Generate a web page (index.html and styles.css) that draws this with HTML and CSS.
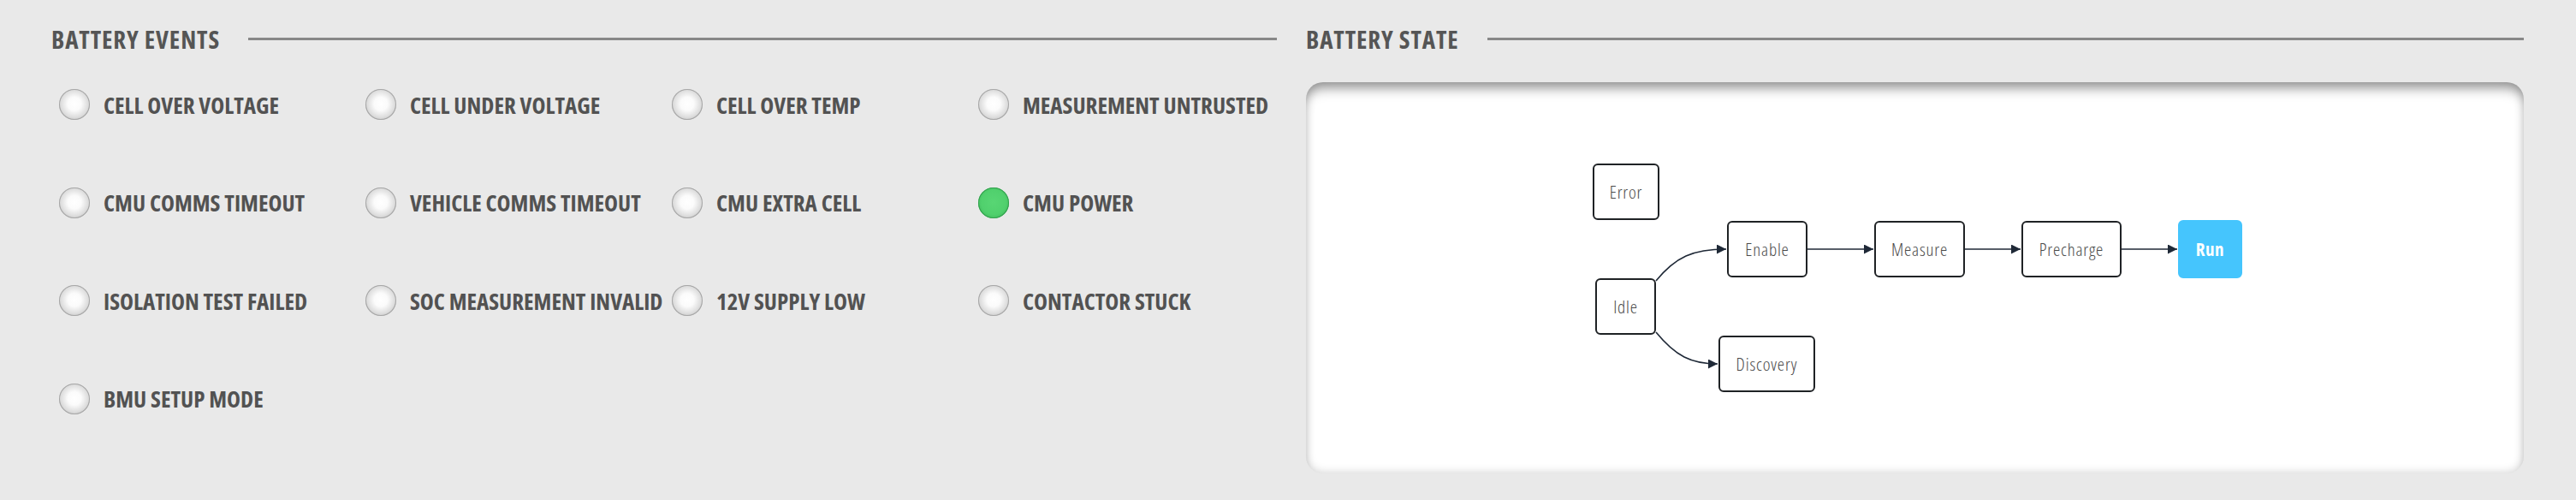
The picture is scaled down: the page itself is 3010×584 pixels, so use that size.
FILE: index.html
```html
<!DOCTYPE html>
<html lang="en">
<head>
<meta charset="utf-8">
<title>Battery</title>
<link rel="stylesheet" href="styles.css">
</head>
<body>
<div class="page">
  <section class="col">
    <div class="section-head"><h2 class="title">BATTERY EVENTS</h2><div class="rule"></div></div>
    <div class="events">
      <div class="event"><span class="led"></span><span class="label">CELL OVER VOLTAGE</span></div>
      <div class="event"><span class="led"></span><span class="label">CELL UNDER VOLTAGE</span></div>
      <div class="event"><span class="led"></span><span class="label">CELL OVER TEMP</span></div>
      <div class="event"><span class="led"></span><span class="label">MEASUREMENT UNTRUSTED</span></div>
      <div class="event"><span class="led"></span><span class="label">CMU COMMS TIMEOUT</span></div>
      <div class="event"><span class="led"></span><span class="label">VEHICLE COMMS TIMEOUT</span></div>
      <div class="event"><span class="led"></span><span class="label">CMU EXTRA CELL</span></div>
      <div class="event"><span class="led on"></span><span class="label">CMU POWER</span></div>
      <div class="event"><span class="led"></span><span class="label">ISOLATION TEST FAILED</span></div>
      <div class="event"><span class="led"></span><span class="label">SOC MEASUREMENT INVALID</span></div>
      <div class="event"><span class="led"></span><span class="label">12V SUPPLY LOW</span></div>
      <div class="event"><span class="led"></span><span class="label">CONTACTOR STUCK</span></div>
      <div class="event"><span class="led"></span><span class="label">BMU SETUP MODE</span></div>
    </div>
  </section>
  <section class="col">
    <div class="section-head"><h2 class="title">BATTERY STATE</h2><div class="rule"></div></div>
    <div class="card">
      <div class="diagram">
        <svg class="edges" width="1424" height="457" viewBox="0 0 1424 457">
          <defs>
            <marker id="arrow" viewBox="0 0 10 10" refX="10" refY="5" markerWidth="11" markerHeight="11" markerUnits="userSpaceOnUse" orient="auto">
              <path class="head" d="M0,0 L10,5 L0,10 z"/>
            </marker>
          </defs>
          <path class="edge" d="M409,232 C432,204 452,195 491,195" marker-end="url(#arrow)"/>
          <path class="edge" d="M409,292 C432,320 450,329 481,329" marker-end="url(#arrow)"/>
          <path class="edge" d="M586,195 L663,195" marker-end="url(#arrow)"/>
          <path class="edge" d="M770,195 L835,195" marker-end="url(#arrow)"/>
          <path class="edge" d="M953,195 L1018,195" marker-end="url(#arrow)"/>
        </svg>
        <div class="node n-error">Error</div>
        <div class="node n-idle">Idle</div>
        <div class="node n-enable">Enable</div>
        <div class="node n-measure">Measure</div>
        <div class="node n-precharge">Precharge</div>
        <div class="node n-run active">Run</div>
        <div class="node n-discovery">Discovery</div>
      </div>
    </div>
  </section>
</div>
</body>
</html>
```

FILE: styles.css
```css
* { box-sizing: border-box; }
html, body { margin: 0; padding: 0; }
body {
  background: #e9e9e9;
  width: 3010px;
  height: 584px;
  overflow: hidden;
  font-family: "Open Sans", "DejaVu Sans Condensed", sans-serif;
  font-stretch: 75%;
  color: #555555;
}
.page {
  display: grid;
  grid-template-columns: 1432fr 1423fr;
  column-gap: 34px;
  padding: 0 61px 0 60px;
}
.section-head {
  display: flex;
  align-items: center;
  height: 40px;
  margin-top: 25px;
}
.title {
  margin: 0;
  font-weight: 700;
  font-size: 29px;
  letter-spacing: 0.9px;
  line-height: 1;
  color: #555555;
  white-space: nowrap;
}
.rule {
  flex: 1;
  height: 3px;
  margin-left: 33px;
  background: #888888;
}
.events {
  display: grid;
  grid-template-columns: repeat(4, 1fr);
  grid-auto-rows: 114.5px;
  align-items: center;
  margin-top: 0;
}
.event {
  display: flex;
  align-items: center;
  gap: 16px;
  padding-left: 9px;
  white-space: nowrap;
}
.led {
  flex: none;
  width: 36px;
  height: 36px;
  border-radius: 50%;
  background: radial-gradient(circle at 50% 48%, #ffffff 0%, #fbfbfb 30%, #dcdcdc 62%, #a8a8a8 90%, #9a9a9a 100%);
  box-shadow: 0 0 0 1px #a6a6a6 inset;
}
.led.on {
  background: radial-gradient(circle at 50% 48%, #58d674 0%, #50d06d 55%, #3fb85a 82%, #2e9a48 100%);
  box-shadow: 0 0 0 1px #33a04e inset;
}
.label {
  font-weight: 700;
  font-size: 27px;
  line-height: 1;
  color: #525252;
}
.card {
  margin-top: 31px;
  height: 457px;
  border-radius: 20px;
  background: #ffffff;
  box-shadow: inset 0 14px 14px -6px rgba(0,0,0,0.34), inset 0 0 12px rgba(0,0,0,0.2);
}
.diagram {
  position: relative;
  width: 100%;
  height: 100%;
}
.edges {
  position: absolute;
  left: 0;
  top: 0;
}
.edge {
  fill: none;
  stroke: #1f2937;
  stroke-width: 1.6;
}
.head {
  fill: #1f2937;
  stroke: none;
}
.node {
  position: absolute;
  height: 66px;
  display: flex;
  align-items: center;
  justify-content: center;
  border: 2px solid #1f2225;
  border-radius: 6px;
  background: #ffffff;
  font-size: 21px;
  font-weight: 300;
  letter-spacing: 0.8px;
  color: #4a4a4a;
}
.node.active {
  background: #45c5fd;
  border-color: #45c5fd;
  color: #ffffff;
  font-weight: 700;
  font-size: 21px;
  letter-spacing: 0.5px;
}
.n-error { left: 335px; top: 95px; width: 78px; }
.n-idle { left: 338px; top: 229px; width: 71px; }
.n-enable { left: 492px; top: 162px; width: 94px; }
.n-measure { left: 664px; top: 162px; width: 106px; }
.n-precharge { left: 836px; top: 162px; width: 117px; }
.n-run { left: 1019px; top: 161px; width: 75px; height: 68px; }
.n-discovery { left: 482px; top: 296px; width: 113px; }
```
